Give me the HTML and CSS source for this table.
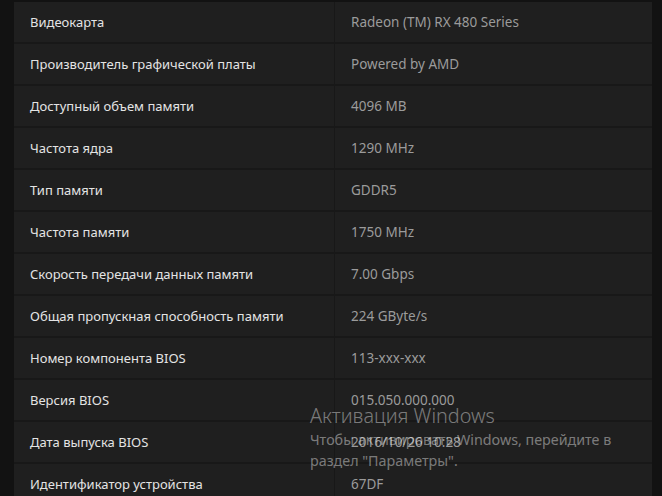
FILE: index.html
```html
<!DOCTYPE html>
<html lang="ru">
<head>
<meta charset="utf-8">
<link rel="stylesheet" href="styles.css">
</head>
<body>
<div class="page">
  <div class="table">
    <div class="row"><div class="cell label">Видеокарта</div><div class="cell value">Radeon (TM) RX 480 Series</div></div>
    <div class="row"><div class="cell label">Производитель графической платы</div><div class="cell value">Powered by AMD</div></div>
    <div class="row"><div class="cell label">Доступный объем памяти</div><div class="cell value">4096 MB</div></div>
    <div class="row"><div class="cell label">Частота ядра</div><div class="cell value">1290 MHz</div></div>
    <div class="row"><div class="cell label">Тип памяти</div><div class="cell value">GDDR5</div></div>
    <div class="row"><div class="cell label">Частота памяти</div><div class="cell value">1750 MHz</div></div>
    <div class="row"><div class="cell label">Скорость передачи данных памяти</div><div class="cell value">7.00 Gbps</div></div>
    <div class="row"><div class="cell label">Общая пропускная способность памяти</div><div class="cell value">224 GByte/s</div></div>
    <div class="row"><div class="cell label">Номер компонента BIOS</div><div class="cell value">113-xxx-xxx</div></div>
    <div class="row"><div class="cell label">Версия BIOS</div><div class="cell value">015.050.000.000</div></div>
    <div class="row"><div class="cell label">Дата выпуска BIOS</div><div class="cell value">2016/10/26 10:28</div></div>
    <div class="row"><div class="cell label">Идентификатор устройства</div><div class="cell value">67DF</div></div>
  </div>
</div>
<div class="watermark">
  <div class="wm-title">Активация Windows</div>
  <div class="wm-text">Чтобы активировать Windows, перейдите в<br>раздел "Параметры".</div>
</div>
</body>
</html>
```

FILE: styles.css
```css
html, body {
  margin: 0;
  padding: 0;
  background: #121212;
  overflow: hidden;
}
body {
  width: 662px;
  height: 496px;
  font-family: "Noto Sans", "Open Sans", sans-serif;
  font-size: 13px;
}
.page {
  padding: 2px 10px 0 14px;
}
.table {
  display: flex;
  flex-direction: column;
  gap: 2px;
  background: #181818;
}
.row {
  display: grid;
  grid-template-columns: 320px 1fr;
  gap: 1px;
  height: 40px;
}
.cell {
  background: #1f1f1f;
  display: flex;
  align-items: center;
  padding-left: 16px;
  white-space: nowrap;
}
.label {
  color: #e4e4e4;
}
.value {
  color: #9b9b9b;
  font-size: 13.5px;
}
.watermark {
  position: absolute;
  left: 310px;
  top: 402px;
  color: rgba(255, 255, 255, 0.42);
  font-family: "Noto Sans", "Open Sans", sans-serif;
}
.wm-title {
  font-size: 19.8px;
  font-weight: 300;
  line-height: 27px;
}
.wm-text {
  font-size: 14.3px;
  line-height: 21px;
}
```
